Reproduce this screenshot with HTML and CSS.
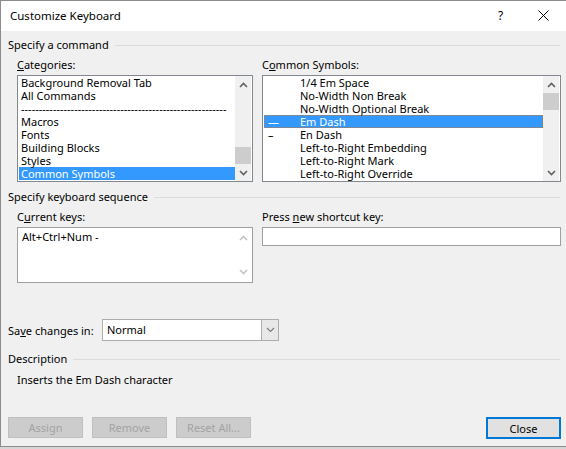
FILE: index.html
```html
<!DOCTYPE html>
<html lang="en">
<head>
    <meta charset="UTF-8">
    <title>Customize Keyboard</title>
    <link rel="stylesheet" href="styles.css">
</head>
<body>

    <div class="dialog">
        <div class="titlebar">
            <span class="title">Customize Keyboard</span>
            <span class="help">?</span>
            <svg class="close-x" width="11" height="11" viewBox="0 0 11 11">
                <path d="M0.5 0.5 L10.5 10.5 M10.5 0.5 L0.5 10.5" stroke="#000" stroke-width="1" fill="none"/>
            </svg>
        </div>

        <div class="content">
            <div class="group-head"><span>Specify a command</span><i></i></div>

            <div class="columns">
                <div class="field">
                    <div class="label"><u>C</u>ategories:</div>
                    <div class="listbox">
                        <ul class="rows">
                            <li>Background Removal Tab</li>
                            <li>All Commands</li>
                            <li>----------------------------------------------------------</li>
                            <li>Macros</li>
                            <li>Fonts</li>
                            <li>Building Blocks</li>
                            <li>Styles</li>
                            <li class="selected">Common Symbols</li>
                        </ul>
                        <div class="vscroll at-end">
                            <div class="arrow"><svg width="9" height="6" viewBox="0 0 9 6"><path d="M1 5 L4.5 1.5 L8 5" /></svg></div>
                            <div class="track"><div class="thumb"></div></div>
                            <div class="arrow"><svg width="9" height="6" viewBox="0 0 9 6"><path d="M1 1 L4.5 4.5 L8 1" /></svg></div>
                        </div>
                    </div>
                </div>

                <div class="field">
                    <div class="label">C<u>o</u>mmon Symbols:</div>
                    <div class="listbox">
                        <ul class="rows symbols">
                            <li><span class="sym"></span>1/4 Em Space</li>
                            <li><span class="sym"></span>No-Width Non Break</li>
                            <li><span class="sym"></span>No-Width Optional Break</li>
                            <li class="selected focused"><span class="sym">—</span>Em Dash</li>
                            <li><span class="sym">–</span>En Dash</li>
                            <li><span class="sym"></span>Left-to-Right Embedding</li>
                            <li><span class="sym"></span>Left-to-Right Mark</li>
                            <li><span class="sym"></span>Left-to-Right Override</li>
                        </ul>
                        <div class="vscroll">
                            <div class="arrow"><svg width="9" height="6" viewBox="0 0 9 6"><path d="M1 5 L4.5 1.5 L8 5" /></svg></div>
                            <div class="track"><div class="thumb"></div></div>
                            <div class="arrow"><svg width="9" height="6" viewBox="0 0 9 6"><path d="M1 1 L4.5 4.5 L8 1" /></svg></div>
                        </div>
                    </div>
                </div>
            </div>

            <div class="group-head second"><span>Specify keyboard sequence</span><i></i></div>

            <div class="columns">
                <div class="field">
                    <div class="label">C<u>u</u>rrent keys:</div>
                    <div class="listbox keys">
                        <ul class="rows">
                            <li>Alt+Ctrl+Num -</li>
                        </ul>
                        <div class="vscroll disabled">
                            <div class="arrow"><svg width="9" height="6" viewBox="0 0 9 6"><path d="M1 5 L4.5 1.5 L8 5" /></svg></div>
                            <div class="track"></div>
                            <div class="arrow"><svg width="9" height="6" viewBox="0 0 9 6"><path d="M1 1 L4.5 4.5 L8 1" /></svg></div>
                        </div>
                    </div>
                </div>

                <div class="field">
                    <div class="label">Press <u>n</u>ew shortcut key:</div>
                    <div class="textbox"></div>
                </div>
            </div>

            <div class="save-row">
                <span class="save-label">Sa<u>v</u>e changes in:</span>
                <div class="combo">
                    <span class="combo-value">Normal</span>
                    <span class="combo-button"><svg width="9" height="6" viewBox="0 0 9 6"><path d="M1 1 L4.5 4.5 L8 1" /></svg></span>
                </div>
            </div>

            <div class="group-head desc-head"><span>Description</span><i></i></div>
            <p class="desc">Inserts the Em Dash character</p>

            <div class="buttons">
                <button class="btn" disabled>Assign</button>
                <button class="btn" disabled>Remove</button>
                <button class="btn" disabled>Reset All...</button>
                <button class="btn default">Close</button>
            </div>
        </div>
    </div>

</body>
</html>
```

FILE: styles.css
```css
body {
    margin: 0;
    font-family: "Noto Sans", "Open Sans", sans-serif;
    font-size: 11px;
    color: #000;
    background-color: #d6d6d6;
}
.dialog {
    width: 566px;
    height: 447px;
    box-sizing: border-box;
    border-top: 1px solid #8c8c8c;
    border-left: 1px solid #8c8c8c;
    border-bottom: 1px solid #8c8c8c;
    background-color: #f0f0f0;
    display: flex;
    flex-direction: column;
}
.titlebar {
    height: 30px;
    background-color: #fff;
    display: flex;
    align-items: center;
    padding: 0 0 2px 9px;
    box-sizing: border-box;
}
.title {
    font-size: 11.5px;
    flex: 1;
}
.help {
    font-size: 12px;
    width: 40px;
}
.close-x {
    margin-right: 17px;
}
.content {
    flex: 1;
    padding: 7px 5px 0 7px;
    display: flex;
    flex-direction: column;
}
.group-head {
    display: flex;
    align-items: center;
    gap: 6px;
    height: 14px;
    line-height: 14px;
}
.group-head i {
    flex: 1;
    border-top: 1px solid #dcdcdc;
    margin-right: 1px;
}
.group-head.second {
    margin-top: 8px;
}
.columns {
    display: grid;
    grid-template-columns: 236px 299px;
    column-gap: 9px;
    margin-left: 9px;
    margin-top: 6px;
}
.label {
    height: 14px;
    line-height: 14px;
    margin-bottom: 3px;
}
u {
    text-underline-offset: 1px;
}
.listbox {
    height: 107px;
    box-sizing: border-box;
    border: 1px solid #828790;
    background-color: #fff;
    padding: 0 1px;
    display: flex;
}
.rows {
    flex: 1;
    list-style: none;
    margin: 0;
    padding: 0;
    overflow: hidden;
}
.rows li {
    height: 13px;
    line-height: 13px;
    padding-left: 2px;
    white-space: nowrap;
}
.rows li.selected {
    background-color: #3399ff;
    color: #fff;
}
.rows li.focused {
    outline: 1px dotted #c8782a;
    outline-offset: -1px;
}
.symbols li {
    padding-left: 4px;
}
.sym {
    display: inline-block;
    width: 32px;
}
.vscroll {
    width: 16px;
    background-color: #f0f0f0;
    display: flex;
    flex-direction: column;
}
.vscroll .arrow {
    height: 17px;
    display: flex;
    align-items: center;
    justify-content: center;
}
.vscroll svg path,
.combo-button svg path {
    fill: none;
    stroke: #606060;
    stroke-width: 1.6;
}
.vscroll .track {
    flex: 1;
    display: flex;
    flex-direction: column;
}
.vscroll.at-end .track {
    justify-content: flex-end;
}
.vscroll .thumb {
    height: 17px;
    background-color: #cdcdcd;
}
.listbox.keys {
    height: 56px;
    border-color: #a0a0a0;
    padding-top: 2px;
}
.listbox.keys .rows li {
    padding-left: 3px;
}
.vscroll.disabled {
    background-color: #fff;
    margin-top: -2px;
}
.vscroll.disabled .arrow {
    height: 20px;
}
.vscroll.disabled svg path {
    stroke: #c4c4c4;
}
.textbox {
    height: 19px;
    box-sizing: border-box;
    border: 1px solid #a0a0a0;
    background-color: #fff;
}
.save-row {
    display: flex;
    align-items: center;
    margin-top: 36px;
}
.save-label {
    width: 94px;
}
.combo {
    width: 177px;
    height: 22px;
    box-sizing: border-box;
    border: 1px solid #adadad;
    background-color: #fff;
    display: flex;
    align-items: stretch;
}
.combo-value {
    flex: 1;
    padding-left: 4px;
    line-height: 20px;
}
.combo-button {
    width: 16px;
    border-left: 1px solid #adadad;
    background-color: #e8e8e8;
    display: flex;
    align-items: center;
    justify-content: center;
}
.combo-button svg path {
    stroke: #7a7a7a;
    stroke-width: 1.1;
}
.desc-head {
    margin-top: 11px;
}
.desc {
    margin: 7px 0 0 9px;
    height: 14px;
    line-height: 14px;
}
.buttons {
    display: flex;
    gap: 9px;
    margin-top: 30px;
}
.btn {
    width: 75px;
    height: 21px;
    font-family: inherit;
    font-size: 11px;
    padding: 0;
    border: 1px solid #bfbfbf;
    background-color: #cccccc;
    color: #a3a3a3;
}
.btn.default {
    margin-left: auto;
    height: 22px;
    border: 2px solid #0078d7;
    background-color: #e1e1e1;
    color: #000;
}
```
